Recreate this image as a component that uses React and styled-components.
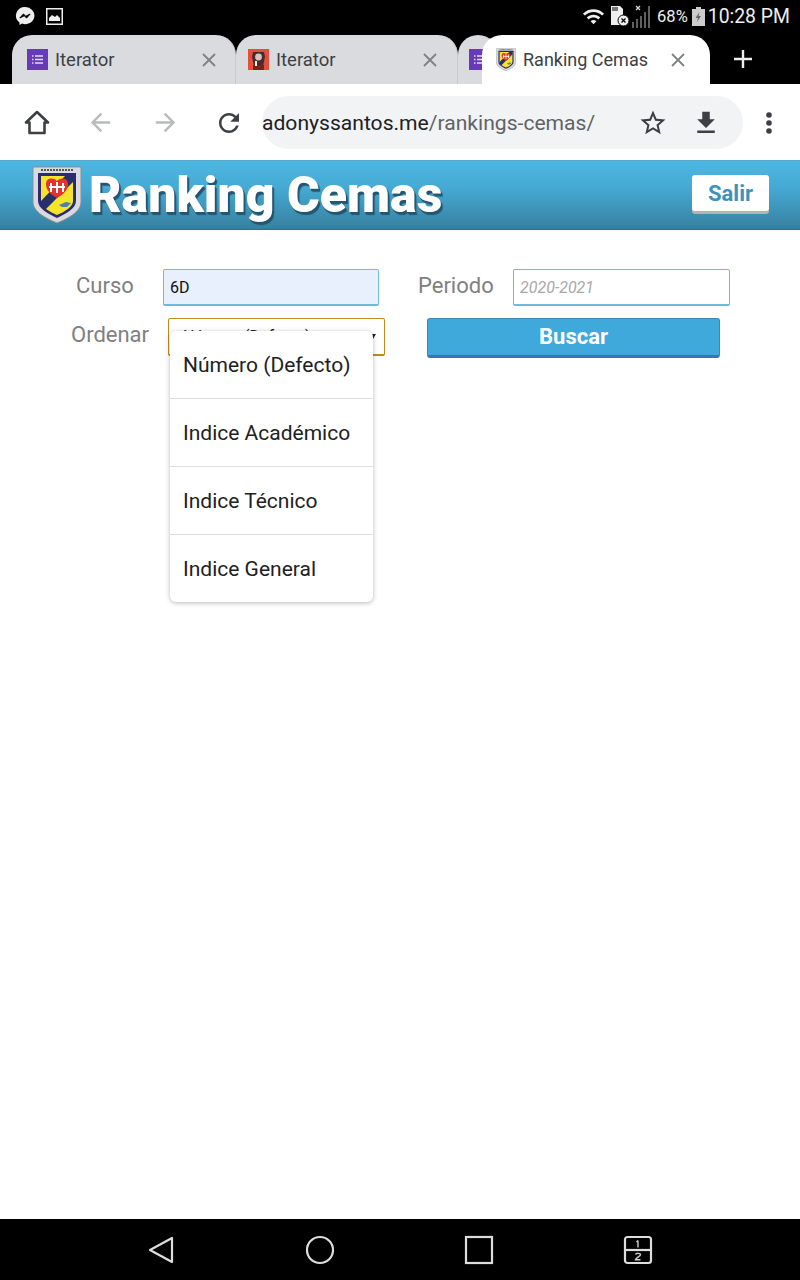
import React from "react";
import styled, { createGlobalStyle } from "styled-components";

const GlobalStyle = createGlobalStyle`
  html, body {
    margin: 0;
    padding: 0;
    background: #fff;
  }
  body {
    font-family: Roboto, "Liberation Sans", sans-serif;
  }
`;

const ShieldLogo = ({ size }) => (
  <svg width={size} height={size * 1.16} viewBox="0 0 50 58">
    <path d="M1 1h48v35c0 10-14 17-24 21C15 53 1 46 1 36z" fill="#d9dade" stroke="#8b8f96" />
    <path d="M6 7h38v28c0 8-11 13-19 17C17 48 6 43 6 35z" fill="#2d2a72" />
    <path d="M9 10h32v25c0 6-9 11-16 14C18 46 9 41 9 35z" fill="#f3e52c" />
    <path d="M33 10h8v6L13 44l-4-6v-3z" fill="#27306b" />
    <path d="M25 32c-7-4-11-8-11-14 0-6 7-7 11-3 4-4 11-3 11 3 0 6-4 10-11 14z" fill="#e5322d" />
    <path d="M19 17v9M25 16v11M31 17v9M17 21h16" stroke="#fff" strokeWidth="2" />
    <path d="M27 39l7-3 5 1-4 4h-5z" fill="#4d7fb5" />
    <path d="M9 4h32" stroke="#555" strokeDasharray="2 1" strokeWidth="2" />
  </svg>
);

const FormsIcon = () => (
  <svg width="21" height="21" viewBox="0 0 21 21">
    <rect width="21" height="21" fill="#673ab7" />
    <path d="M8 7h8M8 10.5h8M8 14h8" stroke="#e6dcf5" strokeWidth="1.4" />
    <path d="M5 7h1.5M5 10.5h1.5M5 14h1.5" stroke="#e6dcf5" strokeWidth="1.4" />
  </svg>
);

const AvatarIcon = () => (
  <svg width="21" height="21" viewBox="0 0 21 21">
    <rect width="21" height="21" fill="#e0503a" />
    <path d="M5 3h11l1 5-2 9H6L4 8z" fill="#4a2a2a" />
    <circle cx="10.5" cy="8" r="3.4" fill="#d9c4bc" />
    <path d="M5 16h11v5H5z" fill="#7d1f1c" />
    <path d="M7 12h2v5H7z" fill="#eee" />
  </svg>
);

const CloseIcon = ({ color }) => (
  <svg width="14" height="14" viewBox="0 0 14 14">
    <path d="M1 1l12 12M13 1L1 13" stroke={color} strokeWidth="1.8" />
  </svg>
);

const MaterialIcon = ({ d, color, size }) => (
  <svg width={size} height={size} viewBox="0 0 24 24">
    <path d={d} fill={color} />
  </svg>
);

const ICONS = {
  back: "M20 11H7.83l5.59-5.59L12 4l-8 8 8 8 1.41-1.41L7.83 13H20v-2z",
  forward: "M12 4l-1.41 1.41L16.17 11H4v2h12.17l-5.58 5.59L12 20l8-8z",
  reload: "M17.65 6.35C16.2 4.9 14.21 4 12 4c-4.42 0-7.99 3.58-7.99 8s3.57 8 7.99 8c3.73 0 6.84-2.55 7.73-6h-2.08c-.82 2.33-3.04 4-5.65 4-3.31 0-6-2.69-6-6s2.69-6 6-6c1.66 0 3.14.69 4.22 1.78L13 11h7V4l-2.35 2.35z",
  star: "M22 9.24l-7.19-.62L12 2 9.19 8.63 2 9.24l5.46 4.73L5.82 21 12 17.27 18.18 21l-1.63-7.03L22 9.24zM12 15.4l-3.76 2.27 1-4.28-3.32-2.88 4.38-.38L12 6.1l1.71 4.04 4.38.38-3.32 2.88 1 4.28L12 15.4z",
  download: "M19 9h-4V3H9v6H5l7 7 7-7zM5 18v2h14v-2H5z",
  wifi: "M1 9l2 2c4.97-4.97 13.03-4.97 18 0l2-2C16.93 2.93 7.08 2.93 1 9zm8 8l3 3 3-3c-1.65-1.66-4.34-1.66-6 0zm-4-4l2 2c2.76-2.76 7.24-2.76 10 0l2-2C15.14 9.14 8.87 9.14 5 13z",
};

const Page = styled.div`
  width: 800px;
  height: 1280px;
  display: flex;
  flex-direction: column;
  overflow: hidden;
  background: #fff;
`;

const StatusBar = styled.div`
  height: 34px;
  flex: none;
  box-sizing: border-box;
  background: #000;
  display: flex;
  align-items: center;
  padding: 0 10px 2px 15px;
  color: #eee;
`;

const StatusLeft = styled.div`
  display: flex;
  align-items: center;
  gap: 11px;
  flex: 1;
`;

const StatusRight = styled.div`
  display: flex;
  align-items: center;
`;

const Percent = styled.span`
  font-size: 16.5px;
  margin: 0 4px 0 5px;
`;

const Clock = styled.span`
  font-size: 19.4px;
  margin-left: 3px;
`;

const TabStrip = styled.div`
  height: 50px;
  flex: none;
  background: #000;
  display: flex;
  align-items: flex-end;
  padding-left: 12px;
`;

const Tab = styled.div`
  height: 49px;
  width: ${(p) => p.$width}px;
  flex: none;
  box-sizing: border-box;
  display: flex;
  align-items: center;
  gap: 7px;
  padding: 0 ${(p) => p.$right || 0}px 0 ${(p) => p.$left}px;
  background: ${(p) => (p.$active ? "#fff" : "#dadbdf")};
  border-radius: 20px 20px 0 0;
  border-right: ${(p) => (p.$active ? "none" : "1px solid #c9cacd")};
  margin-left: ${(p) => p.$overlap || 0}px;
  position: ${(p) => (p.$active ? "relative" : "static")};
  overflow: hidden;
  color: #3c4043;
  font-size: ${(p) => (p.$active ? 18 : 18.5)}px;

  svg {
    flex: none;
  }
`;

const TabLabel = styled.span`
  flex: 1;
  white-space: nowrap;
`;

const NewTab = styled.div`
  margin: 0 0 0 23px;
  height: 50px;
  display: flex;
  align-items: center;
`;

const Toolbar = styled.div`
  height: 76px;
  flex: none;
  box-sizing: border-box;
  padding-top: 1px;
  background: #fff;
  display: flex;
  align-items: center;
`;

const ToolSlot = styled.div`
  width: ${(p) => p.$width}px;
  flex: none;
  display: flex;
  justify-content: center;
  align-items: center;
`;

const Omnibox = styled.div`
  width: 481px;
  height: 53px;
  flex: none;
  box-sizing: border-box;
  display: flex;
  align-items: center;
  background: #f1f3f4;
  border-radius: 27px;
  font-size: 21.1px;
  color: #5f6368;
`;

const Url = styled.div`
  flex: 1;
  white-space: nowrap;
`;

const Host = styled.span`
  color: #202124;
`;

const AppHeader = styled.header`
  height: 70px;
  flex: none;
  box-sizing: border-box;
  display: flex;
  align-items: center;
  padding: 0 31px 0 32px;
  background: linear-gradient(#4cb7e3 0%, #45a9d3 40%, #37809f 100%);
  border-bottom: 1px solid #2e6f8c;
  border-top: 1px solid #5fa7c7;
`;

const HeaderLogo = styled.div`
  display: flex;
  margin-right: 7px;
`;

const Title = styled.h1`
  margin: 0;
  flex: 1;
  font-size: 50px;
  font-weight: 900;
  color: #fff;
  text-shadow: 1px 2px 0 #25566f, 2px 3px 1px #25566f;
`;

const LogoutButton = styled.button`
  width: 77px;
  height: 36px;
  margin-bottom: 4px;
  border: none;
  border-radius: 3px;
  background: #fff;
  box-shadow: 0 3px 0 #b4b4b4;
  color: #3c93bd;
  font-family: inherit;
  font-size: 22px;
  font-weight: 700;
  padding: 0;
`;

const Main = styled.main`
  flex: 1;
  padding-top: 39px;
  display: flex;
  flex-direction: column;
  gap: 12px;
`;

const FormRow = styled.div`
  display: flex;
  align-items: flex-start;
  padding-left: ${(p) => p.$left}px;
`;

const FieldLabel = styled.label`
  width: ${(p) => p.$width}px;
  margin-left: ${(p) => p.$gap || 0}px;
  flex: none;
  font-size: 22px;
  line-height: 34px;
  color: #808080;
`;

const TextField = styled.div`
  width: ${(p) => p.$width}px;
  height: 37px;
  flex: none;
  box-sizing: border-box;
  display: flex;
  align-items: center;
  padding: 0 6px;
  border: 1px solid #6fbcd9;
  border-bottom-width: 2px;
  border-radius: 2px;
  background: ${(p) => (p.$filled ? "#e8f0fe" : "#fff")};
  color: ${(p) => (p.$filled ? "#111" : "#a9a9a9")};
  font-size: 16px;
  font-style: ${(p) => (p.$filled ? "normal" : "italic")};
`;

const SelectWrap = styled.div`
  width: 217px;
  height: 38px;
  flex: none;
  box-sizing: border-box;
  position: relative;
  border: 1px solid #c08a1e;
  border-bottom-width: 2px;
  border-radius: 2px;
  background: #fff;
`;

const SelectArrow = styled.span`
  position: absolute;
  right: 8px;
  top: 15px;
  width: 0;
  height: 0;
  border-left: 3px solid transparent;
  border-right: 3px solid transparent;
  border-top: 5px solid #222;
`;

const SelectValue = styled.span`
  position: absolute;
  left: 14px;
  top: 8px;
  font-size: 16px;
  color: #222;
  white-space: nowrap;
`;

const Dropdown = styled.ul`
  position: absolute;
  left: 1px;
  top: 12px;
  width: 203px;
  margin: 0;
  padding: 0;
  list-style: none;
  background: #fff;
  border-radius: 6px;
  box-shadow: 0 1px 5px rgba(0, 0, 0, 0.28);
`;

const DropdownItem = styled.li`
  height: ${(p) => (p.$last ? 67 : 68)}px;
  box-sizing: border-box;
  padding: 18px 13px 0;
  font-size: 21px;
  line-height: 32px;
  color: #212121;
  white-space: nowrap;
  border-bottom: 1px solid ${(p) => (p.$last ? "transparent" : "#dedede")};
`;

const SearchButton = styled.button`
  width: 293px;
  height: 40px;
  flex: none;
  margin-left: 42px;
  border: 1px solid #3f86b8;
  border-bottom: 3px solid #3a76ac;
  border-radius: 3px;
  background: #40a9dc;
  color: #fff;
  font-family: inherit;
  font-size: 22px;
  font-weight: 700;
  padding: 0 0 2px;
`;

const NavBar = styled.nav`
  height: 61px;
  flex: none;
  background: #000;
  display: flex;
  align-items: center;
  padding-left: 81px;
`;

const NavSlot = styled.div`
  width: 159px;
  flex: none;
  display: flex;
  justify-content: center;
`;

const options = ["Número (Defecto)", "Indice Académico", "Indice Técnico", "Indice General"];

export default function App() {
  return (
    <Page>
      <GlobalStyle />
      <StatusBar>
        <StatusLeft>
          <svg width="20" height="20" viewBox="0 0 20 20">
            <path d="M10 1a9 8.6 0 0 0-5.5 15.4V19l2.6-1.4A9 8.6 0 1 0 10 1z" fill="#eee" />
            <path d="M4.8 12l3.6-4 2.4 2.2L15.2 8l-3.6 4-2.4-2.2z" fill="#000" stroke="#000" />
          </svg>
          <svg width="17" height="17" viewBox="0 0 17 17">
            <rect x=".75" y=".75" width="15.5" height="15.5" fill="none" stroke="#eee" strokeWidth="1.5" />
            <path d="M3 13V10l3-3 3 2 2-2 3 3v3z" fill="#eee" />
          </svg>
        </StatusLeft>
        <StatusRight>
          <MaterialIcon d={ICONS.wifi} color="#eee" size={23} />
          <svg width="20" height="22" viewBox="0 0 20 22" style={{ marginLeft: 5 }}>
            <path d="M1 1h9l3 3v16H1z" fill="#eee" />
            <path d="M3 2v4M5 2v4M7 2v4" stroke="#000" strokeWidth="1" />
            <circle cx="13.5" cy="15.5" r="5.5" fill="#eee" stroke="#000" />
            <path d="M11.5 13.5l4 4M15.5 13.5l-4 4" stroke="#000" strokeWidth="1.2" />
          </svg>
          <svg width="20" height="24" viewBox="0 0 20 24" style={{ marginLeft: 2 }}>
            <path d="M4 2l4 4M8 2L4 6" stroke="#ddd" strokeWidth="1.2" />
            <path d="M1 18v7M5 15v10M9 12v13M13 8v17M17 2v23" stroke="#777" strokeWidth="1.6" />
          </svg>
          <Percent>68%</Percent>
          <svg width="13" height="19" viewBox="0 0 13 19">
            <path d="M4 0h5v2h4v17H0V2h4z" fill="#ccc" />
            <path d="M7.5 5L3.5 11h2.5l-1 4 4-6H6.5z" fill="#666" />
          </svg>
          <Clock>10:28 PM</Clock>
        </StatusRight>
      </StatusBar>

      <TabStrip>
        <Tab $width={224} $left={15} $right={19}>
          <FormsIcon />
          <TabLabel>Iterator</TabLabel>
          <CloseIcon color="#7f8185" />
        </Tab>
        <Tab $width={222} $left={12} $right={20}>
          <AvatarIcon />
          <TabLabel>Iterator</TabLabel>
          <CloseIcon color="#7f8185" />
        </Tab>
        <Tab $width={40} $left={11}>
          <FormsIcon />
        </Tab>
        <Tab $active $width={228} $left={14} $right={25} $overlap={-16}>
          <ShieldLogo size={20} />
          <TabLabel>Ranking Cemas</TabLabel>
          <CloseIcon color="#7f8185" />
        </Tab>
        <NewTab>
          <svg width="20" height="20" viewBox="0 0 20 20">
            <path d="M10 1v18M1 10h18" stroke="#eee" strokeWidth="2.4" />
          </svg>
        </NewTab>
      </TabStrip>

      <Toolbar>
        <ToolSlot $width={74}>
          <svg width="28" height="28" viewBox="0 0 28 28">
            <path d="M14 3L3 13.5h3.5V24h15V13.5H25z" fill="none" stroke="#3c3f43" strokeWidth="2.6" strokeLinejoin="round" />
          </svg>
        </ToolSlot>
        <ToolSlot $width={52}>
          <MaterialIcon d={ICONS.back} color="#b8babc" size={29} />
        </ToolSlot>
        <ToolSlot $width={78}>
          <MaterialIcon d={ICONS.forward} color="#b8babc" size={29} />
        </ToolSlot>
        <ToolSlot $width={50}>
          <MaterialIcon d={ICONS.reload} color="#3c3f43" size={30} />
        </ToolSlot>
        <ToolSlot $width={8} />
        <Omnibox>
          <Url>
            <Host>adonyssantos.me</Host>/rankings-cemas/
          </Url>
          <ToolSlot $width={40}>
            <MaterialIcon d={ICONS.star} color="#3c3f43" size={30} />
          </ToolSlot>
          <ToolSlot $width={66}>
            <MaterialIcon d={ICONS.download} color="#3c3f43" size={30} />
          </ToolSlot>
          <ToolSlot $width={4} />
        </Omnibox>
        <ToolSlot $width={52}>
          <svg width="8" height="24" viewBox="0 0 8 24">
            <circle cx="4" cy="4" r="2.8" fill="#3c3f43" />
            <circle cx="4" cy="12" r="2.8" fill="#3c3f43" />
            <circle cx="4" cy="20" r="2.8" fill="#3c3f43" />
          </svg>
        </ToolSlot>
      </Toolbar>

      <AppHeader>
        <HeaderLogo>
          <ShieldLogo size={50} />
        </HeaderLogo>
        <Title>Ranking Cemas</Title>
        <LogoutButton>Salir</LogoutButton>
      </AppHeader>

      <Main>
        <FormRow $left={76}>
          <FieldLabel $width={87}>Curso</FieldLabel>
          <TextField $width={216} $filled>6D</TextField>
          <FieldLabel $width={95} $gap={39}>Periodo</FieldLabel>
          <TextField $width={217}>2020-2021</TextField>
        </FormRow>
        <FormRow $left={71}>
          <FieldLabel $width={97}>Ordenar</FieldLabel>
          <SelectWrap>
            <SelectValue>Número (Defecto)</SelectValue>
            <SelectArrow />
            <Dropdown>
              {options.map((option, i) => (
                <DropdownItem key={option} $last={i === options.length - 1}>{option}</DropdownItem>
              ))}
            </Dropdown>
          </SelectWrap>
          <SearchButton>Buscar</SearchButton>
        </FormRow>
      </Main>

      <NavBar>
        <NavSlot>
          <svg width="28" height="30" viewBox="0 0 28 30">
            <path d="M25 3v24L3 15z" fill="none" stroke="#ddd" strokeWidth="2.2" strokeLinejoin="round" />
          </svg>
        </NavSlot>
        <NavSlot>
          <svg width="30" height="30" viewBox="0 0 30 30">
            <circle cx="15" cy="15" r="13" fill="none" stroke="#ddd" strokeWidth="2.2" />
          </svg>
        </NavSlot>
        <NavSlot>
          <svg width="30" height="30" viewBox="0 0 30 30">
            <rect x="2" y="2" width="26" height="26" fill="none" stroke="#ddd" strokeWidth="2.2" />
          </svg>
        </NavSlot>
        <NavSlot>
          <svg width="30" height="30" viewBox="0 0 30 30">
            <rect x="2" y="2" width="26" height="26" rx="2.5" fill="none" stroke="#ddd" strokeWidth="2.2" />
            <path d="M2 15h26" stroke="#ddd" strokeWidth="2.2" />
            <path d="M15 5.5v7M13.5 7l1.5-1.5" fill="none" stroke="#ccc" strokeWidth="1.4" />
            <path d="M12.5 19.5c.5-1.6 5-1.6 5 .2 0 1.4-4.5 3-5 5h5" fill="none" stroke="#ccc" strokeWidth="1.4" />
          </svg>
        </NavSlot>
      </NavBar>
    </Page>
  );
}
